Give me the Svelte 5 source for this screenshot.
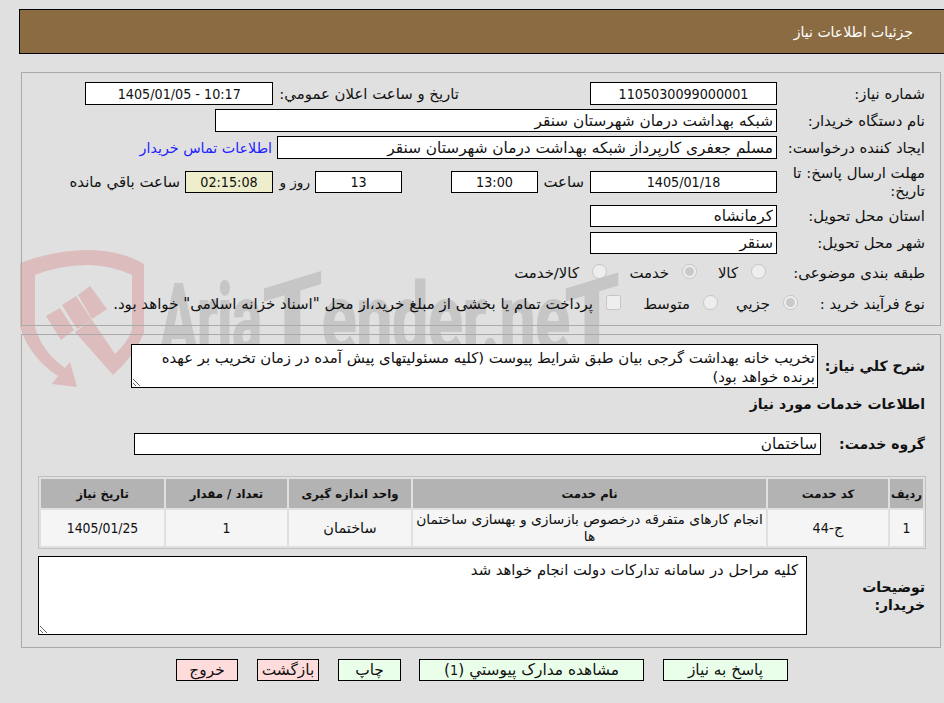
<script>
  const rows = [
    { idx: '1', code: '44', name: 'انجام کارهای متفرقه درخصوص بازسازی و بهسازی ساختمان ها', unit: 'ساختمان', qty: '1', date: '1405/01/25' }
  ];
</script>

<div class="page" dir="rtl">
  <svg class="watermark" viewBox="0 240 640 150" width="640" height="150" aria-hidden="true">
    <path class="wm-red" d="M20 263 Q55 250 88 250 Q120 250 144 264 L144 333 Q135 355 113 375 L75 332 L92 320 L115 354 Q127 343 132 330 L132 275 Q110 265 88 265 Q60 265 35 275 L35 327 Q42 352 65 368 L70 362 L77 387 L52 384 L58 376 Q30 358 20 327 Z" />
    <path class="wm-red" d="M46 316 L60 308 L74 330 L61 340 Z M62 305 L76 296 L92 320 L77 329 Z M78 295 L90 286 L107 309 L92 319 Z" />
    <text class="wm-text" x="160" y="352" font-size="96" textLength="102" lengthAdjust="spacingAndGlyphs">Aria</text>
    <text class="wm-text" transform="translate(263 358) skewY(-17)" font-size="96" textLength="59" lengthAdjust="spacingAndGlyphs">T</text>
    <text class="wm-text" x="322" y="352" font-size="96" textLength="248" lengthAdjust="spacingAndGlyphs">ender.ne</text>
    <text class="wm-text" transform="translate(565 358) skewY(-17)" font-size="96" textLength="54" lengthAdjust="spacingAndGlyphs">T</text>
  </svg>

  <header class="title-bar">جزئیات اطلاعات نیاز</header>

  <section class="panel info">
    <div class="row">
      <span class="label">شماره نیاز:</span>
      <input class="box num center w187" readonly value="1105030099000001" />
      <span class="label-inline pub-label">تاریخ و ساعت اعلان عمومي:</span>
      <input class="box num center w188" readonly value="10:17 - 1405/01/05" />
    </div>
    <div class="row">
      <span class="label">نام دستگاه خریدار:</span>
      <input class="box w562" readonly value="شبکه بهداشت درمان شهرستان سنقر" />
    </div>
    <div class="row">
      <span class="label">ایجاد کننده درخواست:</span>
      <input class="box w500" readonly value="مسلم جعفری کارپرداز شبکه بهداشت درمان شهرستان سنقر" />
      <a class="contact" href="#contact">اطلاعات تماس خریدار</a>
    </div>
    <div class="row deadline">
      <span class="label">مهلت ارسال پاسخ: تا تاریخ:</span>
      <input class="box short num center w187" readonly value="1405/01/18" />
      <span class="label-inline hour-label">ساعت</span>
      <input class="box short num center w87" readonly value="13:00" />
      <input class="box short num center w87 days" readonly value="13" />
      <span class="label-inline day-label">روز و</span>
      <input class="box short num center w88 timer" readonly value="02:15:08" />
      <span class="label-inline">ساعت باقي مانده</span>
    </div>
    <div class="row">
      <span class="label">استان محل تحویل:</span>
      <input class="box short w187" readonly value="کرمانشاه" />
    </div>
    <div class="row">
      <span class="label">شهر محل تحویل:</span>
      <input class="box short w187" readonly value="سنقر" />
    </div>
    <div class="row category">
      <span class="label">طبقه بندی موضوعی:</span>
      <div class="options subject">
        <label class="opt w69"><input type="radio" name="subject" disabled />کالا</label>
        <label class="opt w90"><input type="radio" name="subject" disabled checked />خدمت</label>
        <label class="opt"><input type="radio" name="subject" disabled />کالا/خدمت</label>
      </div>
    </div>
    <div class="row process">
      <span class="label narrow">نوع فرآیند خرید :</span>
      <div class="options">
        <label class="opt w80"><input type="radio" name="process" disabled checked />جزيي</label>
        <label class="opt w97"><input type="radio" name="process" disabled />متوسط</label>
        <label class="opt long"><input type="checkbox" disabled />پرداخت تمام یا بخشی از مبلغ خرید،از محل "اسناد خزانه اسلامی" خواهد بود.</label>
      </div>
    </div>
  </section>

  <section class="panel details">
    <div class="row summary">
      <span class="label strong w107">شرح کلي نیاز:</span>
      <textarea class="area summary-area" readonly>تخریب خانه بهداشت گرجی بیان طبق شرایط پیوست (کلیه مسئولیتهای پیش آمده در زمان تخریب بر عهده برنده خواهد بود)</textarea>
    </div>
    <h3 class="section-title">اطلاعات خدمات مورد نیاز</h3>
    <div class="row group">
      <span class="label strong w104">گروه خدمت:</span>
      <input class="box short w687" readonly value="ساختمان" />
    </div>

    <table class="services">
      <colgroup>
        <col class="c-idx" /><col class="c-code" /><col class="c-name" /><col class="c-unit" /><col class="c-qty" /><col class="c-date" />
      </colgroup>
      <thead>
        <tr>
          <th>ردیف</th><th>کد خدمت</th><th>نام خدمت</th><th>واحد اندازه گیری</th><th>تعداد / مقدار</th><th>تاریخ نیاز</th>
        </tr>
      </thead>
      <tbody>
        {#each rows as r}
          <tr>
            <td class="num">{r.idx}</td>
            <td>ج-<span class="num">{r.code}</span></td>
            <td class="name">{r.name}</td>
            <td>{r.unit}</td>
            <td class="num">{r.qty}</td>
            <td class="num">{r.date}</td>
          </tr>
        {/each}
      </tbody>
    </table>

    <div class="row notes">
      <span class="label strong w118">توضیحات خریدار:</span>
      <textarea class="area notes-area" readonly>کلیه مراحل در سامانه تدارکات دولت انجام خواهد شد</textarea>
    </div>
  </section>

  <div class="actions">
    <button class="btn go w125">پاسخ به نیاز</button>
    <button class="btn go w225">مشاهده مدارک پیوستي (<span class="num">1</span>)</button>
    <button class="btn go w63 pull">چاپ</button>
    <button class="btn stop w62">بازگشت</button>
    <button class="btn stop w62">خروج</button>
  </div>
</div>

<style>
  :global(body) {
    margin: 0;
    background: #e0e0e0;
  }

  .page {
    position: relative;
    width: 944px;
    height: 703px;
    overflow: hidden;
    padding-top: 9px;
    box-sizing: border-box;
    font-family: "DejaVu Sans", sans-serif;
    font-size: 14.9px;
    color: #111;
  }

  .watermark {
    position: absolute;
    left: 0;
    top: 240px;
    direction: ltr;
  }
  .wm-red {
    fill: #dcbcbc;
  }
  .wm-text {
    fill: #c6c6c6;
    stroke: #c6c6c6;
    stroke-width: 2px;
    font-family: Roboto, sans-serif;
    font-weight: 700;
  }

  .title-bar {
    position: relative;
    box-sizing: border-box;
    height: 45px;
    margin-left: 19px;
    padding: 0 31px 0 0;
    line-height: 44px;
    background: #8b6b42;
    border: 1px solid #000;
    border-right: 0;
    color: #fff;
    font-size: 14px;
  }

  .panel {
    position: relative;
    box-sizing: border-box;
    width: 920px;
    margin-right: 3px;
    border: 1px solid #aaa;
  }
  .info {
    height: 254px;
    margin-top: 18px;
    padding: 9px 15px 0 0;
    display: flex;
    flex-direction: column;
    gap: 4px;
  }
  .details {
    height: 314px;
    margin-top: 8px;
    padding: 9px 15px 0;
  }

  .row {
    display: flex;
    align-items: center;
    height: 23px;
    flex: none;
  }
  .deadline {
    height: 37px;
  }
  .category {
    height: 30px;
  }
  .process {
    height: 24px;
  }

  .label {
    flex: none;
    width: 148px;
    line-height: 18px;
  }
  .label.narrow {
    width: 127px;
  }
  .label.strong {
    font-weight: 700;
    font-size: 14px;
  }
  .w107 { width: 107px; }
  .w104 { width: 104px; }
  .w118 { width: 118px; }

  .label-inline {
    flex: none;
    margin: 0 5px;
    white-space: nowrap;
  }
  .pub-label {
    margin-right: 131px;
    margin-left: 6px;
  }
  .hour-label {
    margin-right: 6px;
    width: 41px;
  }
  .day-label {
    width: 32px;
    font-size: 13.6px;
  }

  .num {
    font-family: "DejaVu Sans Condensed", "DejaVu Sans", sans-serif;
    font-stretch: condensed;
    font-size: 14.2px;
  }

  .box {
    flex: none;
    box-sizing: border-box;
    height: 23px;
    padding: 0 3px;
    border: 1px solid #000;
    border-radius: 0;
    background: #fff;
    font-family: inherit;
    font-size: 15.3px;
    color: #111;
    outline: none;
  }
  .box.num {
    font-family: "DejaVu Sans Condensed", "DejaVu Sans", sans-serif;
    font-size: 14.2px;
  }
  .box.short {
    height: 22px;
  }
  .center { text-align: center; }
  .w187 { width: 187px; }
  .w188 { width: 188px; }
  .w562 { width: 562px; }
  .w500 { width: 500px; }
  .w87 { width: 87px; }
  .w88 { width: 88px; }
  .w687 { width: 687px; }
  .days {
    margin-right: 49px;
  }
  .timer {
    background: #eeeecc;
  }

  .contact {
    margin-right: 5px;
    color: #2222ff;
    font-size: 14.3px;
    text-decoration: none;
    white-space: nowrap;
  }

  .options {
    display: flex;
    align-items: center;
  }
  .subject {
    margin-right: 11px;
  }
  .opt {
    display: flex;
    align-items: center;
    white-space: nowrap;
    flex: none;
  }
  .opt.long {
    font-size: 15.05px;
  }
  .opt input {
    width: 15px;
    height: 15px;
    margin: -4px 0 0 13px;
  }
  .w69 { width: 69px; }
  .w90 { width: 90px; }
  .w80 { width: 80px; }
  .w97 { width: 97px; }

  .area {
    flex: none;
    box-sizing: border-box;
    padding: 4px 2px 0;
    border: 1px solid #000;
    border-radius: 0;
    background: #fff;
    font-family: inherit;
    font-size: 14.9px;
    line-height: 19px;
    color: #111;
    outline: none;
    overflow: hidden;
  }
  .summary {
    height: 44px;
  }
  .summary-area {
    width: 687px;
    height: 44px;
  }
  .section-title {
    margin: 0;
    height: 45px;
    line-height: 33px;
    font-size: 14px;
  }
  .group {
    height: 22px;
  }

  .services {
    box-sizing: border-box;
    width: 888px;
    margin: 21px -1px 0 0;
    table-layout: fixed;
    border-collapse: separate;
    border-spacing: 2px;
    border: 1px solid #c0c0c0;
    font-size: 14.5px;
  }
  .c-idx { width: 33px; }
  .c-code { width: 120px; }
  .c-name { width: 353px; }
  .c-unit { width: 122px; }
  .c-qty { width: 121px; }
  .c-date { width: 123px; }
  th {
    height: 29px;
    padding: 0;
    background: #b3b3b3;
    font-size: 11.7px;
    text-align: center;
  }
  td {
    height: 36px;
    padding: 0 2px;
    background: #f5f5f5;
    text-align: center;
    line-height: 17px;
  }
  td.num {
    font-size: 13.8px;
  }
  td.name {
    font-size: 13.8px;
  }

  .notes {
    height: 79px;
    margin-top: 7px;
  }
  .notes-area {
    width: 769px;
    height: 79px;
    padding: 3px 8px;
    font-size: 14.8px;
  }

  .actions {
    display: flex;
    gap: 19px;
    margin-top: 11px;
    padding-right: 156px;
  }
  .pull {
    margin-right: -1px;
  }
  .btn {
    position: relative;
    box-sizing: border-box;
    height: 22px;
    padding: 0;
    border: 1px solid #000;
    border-radius: 0;
    font-family: inherit;
    font-size: 15.4px;
    color: #111;
  }
  .go { background: #eaffea; }
  .stop { background: #ffdcdc; }
  .w125 { width: 125px; }
  .w225 { width: 225px; }
  .w63 { width: 63px; }
  .w62 { width: 62px; }
</style>
